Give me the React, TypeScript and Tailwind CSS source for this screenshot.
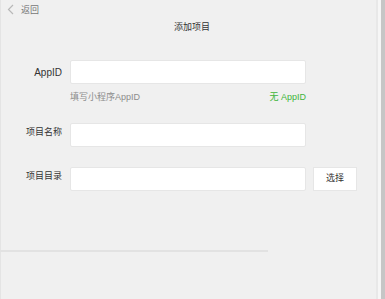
export default function App() {
  const font = { fontFamily: '"Liberation Sans", "Noto Sans CJK SC", sans-serif' };

  return (
    <div className="flex h-[299px] w-[385px] overflow-hidden bg-[#f0f0f0]" style={font}>
      {/* faint left edge */}
      <div className="w-[2px] border-l border-[#e4e4e4]" />
      <div className="flex w-[374px] flex-col">
        {/* back */}
        <div className="mt-[1px] flex h-[14px] items-center gap-[7px] pl-[5px] pt-[3px]">
          <svg width="7" height="11" viewBox="0 0 7 11" fill="none">
            <path d="M6 1 L1.5 5.5 L6 10" stroke="#b8b8b8" strokeWidth="1.2" />
          </svg>
          <span className="text-[9px] leading-[14px] text-[#777]">返回</span>
        </div>

        {/* title */}
        <div className="mt-[5px] pl-[6px] text-center text-[9px] leading-[14px] text-[#333]">添加项目</div>

        {/* form */}
        <div className="mt-[26px] flex flex-col">
          <div className="flex items-center">
            <label className="w-[60px] text-right text-[10px] text-[#333]">AppID</label>
            <input className="ml-[8px] h-[24px] w-[236px] rounded-[2px] border border-[#e6e6e6] bg-white outline-none" />
          </div>
          <div className="mt-[6px] flex w-[304px] justify-between pl-[68px] text-[9px] leading-[14px]">
            <span className="text-[#8c8c8c]">填写小程序AppID</span>
            <span className="text-[#3fb53a]">无 AppID</span>
          </div>

          <div className="mt-[19px] flex items-center">
            <label className="mb-[5px] w-[60px] text-right text-[9px] text-[#333]">项目名称</label>
            <input className="ml-[8px] h-[24px] w-[236px] rounded-[2px] border border-[#e6e6e6] bg-white outline-none" />
          </div>

          <div className="mt-[20px] flex items-center">
            <label className="mb-[4px] w-[60px] text-right text-[9px] text-[#333]">项目目录</label>
            <input className="ml-[8px] h-[24px] w-[236px] rounded-[2px] border border-[#e6e6e6] bg-white outline-none" />
            <button className="ml-[7px] h-[24px] w-[44px] border border-[#e6e6e6] bg-white text-[9px] text-[#333]">选择</button>
          </div>
        </div>

        {/* divider */}
        <div className="mt-[59px] -ml-[2px] h-[2px] w-[268px] bg-[#e2e2e2]" />
      </div>
      {/* right window edge */}
      <div className="w-[2px] bg-[#e8e8e8]" />
      <div className="w-[3px] bg-[#f6f6f6]" />
      <div className="w-[4px] bg-[#c6c6c6]" />
    </div>
  );
}
